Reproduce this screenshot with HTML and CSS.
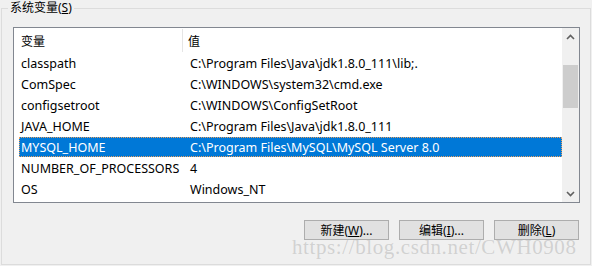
FILE: index.html
```html
<!DOCTYPE html>
<html lang="zh-CN">

<head>
    <meta charset="UTF-8">
    <title>系统变量</title>
    <link rel="stylesheet" href="styles.css">
</head>

<body>
    <div class="group">
        <!-- 分组标题 -->
        <div class="group_title">系统变量(<u>S</u>)</div>

        <!-- 变量列表 -->
        <div class="list">
            <div class="list_body">
                <div class="list_head">
                    <span class="col name">变量</span>
                    <span class="col_sep"></span>
                    <span class="col value">值</span>
                </div>
                <div class="row"><span class="col name">classpath</span><span class="col value">C:\Program Files\Java\jdk1.8.0_111\lib;.</span></div>
                <div class="row"><span class="col name">ComSpec</span><span class="col value">C:\WINDOWS\system32\cmd.exe</span></div>
                <div class="row"><span class="col name">configsetroot</span><span class="col value">C:\WINDOWS\ConfigSetRoot</span></div>
                <div class="row"><span class="col name">JAVA_HOME</span><span class="col value">C:\Program Files\Java\jdk1.8.0_111</span></div>
                <div class="row selected"><span class="col name">MYSQL_HOME</span><span class="col value">C:\Program Files\MySQL\MySQL Server 8.0</span></div>
                <div class="row"><span class="col name">NUMBER_OF_PROCESSORS</span><span class="col value">4</span></div>
                <div class="row"><span class="col name">OS</span><span class="col value">Windows_NT</span></div>
            </div>
            <!-- 滚动条 -->
            <div class="scrollbar">
                <div class="sb_btn">
                    <svg width="9" height="6" viewBox="0 0 9 6"><path d="M1 5 L4.5 1.5 L8 5" fill="none" stroke="#606060" stroke-width="1.6"/></svg>
                </div>
                <div class="sb_track">
                    <div class="sb_thumb"></div>
                </div>
                <div class="sb_btn">
                    <svg width="9" height="6" viewBox="0 0 9 6"><path d="M1 1 L4.5 4.5 L8 1" fill="none" stroke="#606060" stroke-width="1.6"/></svg>
                </div>
            </div>
        </div>

        <!-- 按钮 -->
        <div class="btns">
            <button class="btn">新建(<u>W</u>)...</button>
            <button class="btn">编辑(<u>I</u>)...</button>
            <button class="btn">删除(<u>L</u>)</button>
        </div>

        <div class="watermark">https://blog.csdn.net/CWH0908</div>
    </div>
</body>

</html>
```

FILE: styles.css
```css
* {
    margin: 0;
    padding: 0;
    box-sizing: border-box;
}

body {
    background: #f0f0f0;
    font-family: "Noto Sans", "Noto Sans CJK SC", sans-serif;
    font-size: 12.5px;
    color: #000;
    width: 592px;
    height: 266px;
    overflow: hidden;
}

.group {
    position: relative;
    margin: 8px 0 0 1px;
    width: 590px;
    height: 257px;
    border: 1px solid #dcdcdc;
    padding: 18px 0 0 11px;
}

.group_title {
    position: absolute;
    left: 6px;
    top: -9px;
    padding: 0 2px;
    background: #f0f0f0;
    line-height: 16px;
    font-size: 12px;
}

.group_title u,
.btn u {
    text-underline-offset: 1px;
}

.list {
    display: flex;
    width: 567px;
    height: 176px;
    border: 1px solid #828790;
    background: #fff;
}

.list_body {
    flex: 1;
    padding-left: 5px;
}

.list_head {
    display: flex;
    height: 25px;
    align-items: center;
    font-size: 12px;
}

.list_head .col_sep {
    width: 1px;
    height: 23px;
    background: #e5e5e5;
    margin-left: -6px;
    margin-right: 5px;
}

.row {
    display: flex;
    height: 21px;
    align-items: center;
    border: 1px solid transparent;
}

.row.selected {
    background: #0078d7;
    color: #fff;
    border: 1px dotted #e8a060;
    height: 20px;
    margin-bottom: 1px;
}

.col {
    white-space: nowrap;
    padding-left: 1px;
}

.col.name {
    width: 169px;
}

.list_head .col.name {
    width: 169px;
    padding-left: 2px;
}

.list_head .col.value {
    padding-left: 0;
}

.scrollbar {
    width: 17px;
    background: #f0f0f0;
    display: flex;
    flex-direction: column;
}

.sb_btn {
    height: 17px;
    display: flex;
    align-items: center;
    justify-content: center;
}

.sb_track {
    flex: 1;
    padding: 20px 1px 0 1px;
}

.sb_thumb {
    height: 43px;
    background: #cdcdcd;
}

.btns {
    display: flex;
    justify-content: flex-end;
    gap: 10px;
    margin-top: 17px;
    width: 567px;
    padding-right: 1px;
}

.btn {
    width: 85px;
    height: 20px;
    background: #e1e1e1;
    border: 1px solid #adadad;
    font-family: "Noto Sans", "Noto Sans CJK SC", sans-serif;
    font-size: 12px;
    color: #000;
}

.watermark {
    position: absolute;
    left: 290px;
    top: 226px;
    font-family: "Liberation Serif", serif;
    font-size: 21px;
    letter-spacing: 0.6px;
    color: rgba(150, 150, 150, 0.35);
    white-space: nowrap;
}
```
